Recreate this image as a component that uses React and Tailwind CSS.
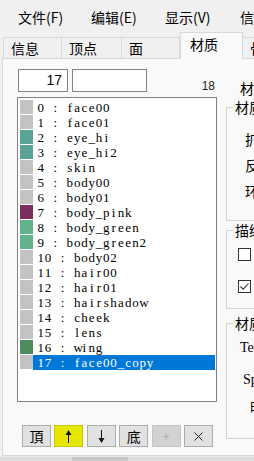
const materials = [
  ["face00", "#c3c3c3"],
  ["face01", "#c3c3c3"],
  ["eye_hi", "#58a596"],
  ["eye_hi2", "#58a596"],
  ["skin", "#c3c3c3"],
  ["body00", "#c3c3c3"],
  ["body01", "#c3c3c3"],
  ["body_pink", "#7b2d5e"],
  ["body_green", "#60b38a"],
  ["body_green2", "#60b38a"],
  ["body02", "#c3c3c3"],
  ["hair00", "#c3c3c3"],
  ["hair01", "#c3c3c3"],
  ["hairshadow", "#c3c3c3"],
  ["cheek", "#c3c3c3"],
  ["lens", "#c3c3c3"],
  ["wing", "#4e8c60"],
  ["face00_copy", "#c3c3c3"],
];

const selected = 17;

// serif glyphs on a fixed cell, like the NSimSun list in the original
function MonoText({ text }) {
  return (
    <span className="inline-flex">
      {text.split("").map((ch, i) => (
        <span key={i} className="inline-block w-[7.3px] text-center">
          {ch === " " ? "\u00a0" : ch}
        </span>
      ))}
    </span>
  );
}

function Tab({ children, className = "" }) {
  return (
    <div
      className={`h-[21px] flex items-center pl-[7px] border-t border-r border-[#d9d9d9] shrink-0 ${className}`}
    >
      {children}
    </div>
  );
}

function Checkbox({ checked }) {
  return (
    <div className="w-[13px] h-[13px] border border-[#333] bg-white shrink-0 flex items-center justify-center">
      {checked && (
        <svg width="11" height="11" viewBox="0 0 11 11">
          <polyline points="1.5,5.5 4.2,8.2 9.5,2.5" fill="none" stroke="#333" strokeWidth="1.1" />
        </svg>
      )}
    </div>
  );
}

function ToolButton({ children, variant = "normal" }) {
  const styles = {
    normal: "bg-[#e1e1e1] border-[#adadad] text-[#000]",
    yellow: "bg-[#e6e600] border-[#c9c900] text-[#000]",
    disabled: "bg-[#d2d2d2] border-[#c4c4c4] text-[#a8a8a8]",
  };
  return (
    <div
      className={`w-[29px] h-[22px] border flex items-center justify-center text-[14px] leading-[16px] ${styles[variant]}`}
    >
      {children}
    </div>
  );
}

function Arrow({ down }) {
  return (
    <svg width="7" height="13" viewBox="0 0 7 13" className={down ? "rotate-180" : ""}>
      <line x1="3.5" y1="3" x2="3.5" y2="13" stroke="#111" strokeWidth="1" />
      <polygon points="3.5,0 6.5,5 0.5,5" fill="#111" />
    </svg>
  );
}

export default function App() {
  return (
    <div className="w-[254px] h-[461px] overflow-hidden bg-[#f0f0f0] font-['Noto_Sans_CJK_SC',sans-serif] text-black flex flex-col">
      {/* menu bar */}
      <div className="h-[33px] shrink-0 flex items-center pl-[18px] text-[14px] leading-[16px] whitespace-nowrap">
        <span className="w-[73px] shrink-0">文件(F)</span>
        <span className="w-[74px] shrink-0">编辑(E)</span>
        <span className="w-[75px] shrink-0">显示(V)</span>
        <span className="shrink-0">信息(I)</span>
      </div>

      {/* tab strip */}
      <div className="h-[25px] shrink-0 flex items-end pl-[3px] text-[14px] leading-[16px] whitespace-nowrap relative z-10">
        <Tab className="w-[59px] border-l">信息</Tab>
        <Tab className="w-[60px]">顶点</Tab>
        <Tab className="w-[58px]">面</Tab>
        <div className="w-[63px] h-[27px] -mb-px shrink-0 bg-[#f9f9f9] border-l border-t border-r border-[#d9d9d9] pl-[9px] pt-[3px]">
          材质
        </div>
        <Tab className="w-[60px]">骨骼</Tab>
      </div>

      {/* tab panel */}
      <div className="ml-[2px] w-[270px] h-[398px] shrink-0 border border-[#d9d9d9] bg-[#f9f9f9] flex pl-[14px] pt-[10px]">
        {/* left column */}
        <div className="w-[200px] shrink-0 flex flex-col">
          <div className="flex items-end h-[23px] ml-px">
            <div className="w-[50px] h-[23px] border border-[#828282] bg-white text-right pr-[5px] text-[14px] leading-[21px] font-['Liberation_Sans',sans-serif]">
              17
            </div>
            <div className="w-[75px] h-[23px] ml-[4px] border border-[#828282] bg-white" />
            <div className="flex-1 text-right pr-[2px] text-[12px] leading-[14px] text-[#222] font-['Liberation_Sans',sans-serif] mb-[-1px]">
              18
            </div>
          </div>

          <div className="mt-[5px] h-[305px] border border-[#828282] bg-white pt-[2px] pl-[2px] pr-px font-['Liberation_Serif',serif] text-[13px] leading-[15px] whitespace-nowrap">
            {materials.map(([name, color], i) => (
              <div key={i} className="h-[15px] flex">
                <div className="w-[13px] h-[14px] shrink-0" style={{ backgroundColor: color }} />
                <div
                  className={`flex-1 pl-[4px] ${
                    i === selected ? "bg-[#0078d7] text-white" : "text-black"
                  }`}
                >
                  <MonoText text={`${i} : ${name}`} />
                </div>
              </div>
            ))}
          </div>

          <div className="mt-[23px] flex gap-[3.4px] pl-[5px]">
            <ToolButton>頂</ToolButton>
            <ToolButton variant="yellow">
              <Arrow />
            </ToolButton>
            <ToolButton>
              <Arrow down />
            </ToolButton>
            <ToolButton>底</ToolButton>
            <ToolButton variant="disabled">
              <span className="text-[12px]">+</span>
            </ToolButton>
            <ToolButton>
              <svg width="9" height="9" viewBox="0 0 9 9">
                <path d="M0.5 0.5 L8.5 8.5 M8.5 0.5 L0.5 8.5" stroke="#222" strokeWidth="1" />
              </svg>
            </ToolButton>
          </div>
        </div>

        {/* right column */}
        <div className="ml-[9px] w-[140px] shrink-0 flex flex-col text-[14px] leading-[16px] whitespace-nowrap">
          <div className="mt-[11px] pl-[14px]">材质数</div>

          <fieldset className="mt-[3px] h-[122px] border border-[#d5d5d5]">
            <legend className="ml-[6px] px-[2px]">材质属性</legend>
            <div className="pt-[11px] pl-[18px]">
              <div className="h-[26px] flex items-center">扩散色</div>
              <div className="h-[26px] flex items-center">反射色</div>
              <div className="h-[26px] flex items-center">环境色</div>
            </div>
          </fieldset>

          <fieldset className="mt-px h-[87px] border border-[#d5d5d5]">
            <legend className="ml-[6px] px-[2px]">描绘</legend>
            <div className="pt-[8px] pl-[11px] flex flex-col gap-[16px]">
              <div className="flex items-center gap-[6px]">
                <Checkbox />
                <span>两面描画</span>
              </div>
              <div className="flex items-center gap-[6px]">
                <Checkbox checked />
                <span>地面影</span>
              </div>
            </div>
          </fieldset>

          <fieldset className="mt-[6px] h-[124px] border border-[#d5d5d5]">
            <legend className="ml-[6px] px-[2px]">材质贴图</legend>
            <div className="flex flex-col font-['Liberation_Serif',serif]">
              <div className="mt-[9px] pl-[13px] h-[16px]">Tex</div>
              <div className="mt-[16px] pl-[16px] h-[16px]">Sph</div>
              <div className="mt-[11px] pl-[23px] h-[16px] font-['Noto_Sans_CJK_SC',sans-serif]">明暗</div>
            </div>
          </fieldset>
        </div>
      </div>

      {/* bottom edge */}
      <div className="flex-1 border-t border-[#e6e6e6] bg-[#dcdcdc] flex">
        <div className="ml-[72px] w-[56px] bg-[#c8c8c8]" />
      </div>
    </div>
  );
}
